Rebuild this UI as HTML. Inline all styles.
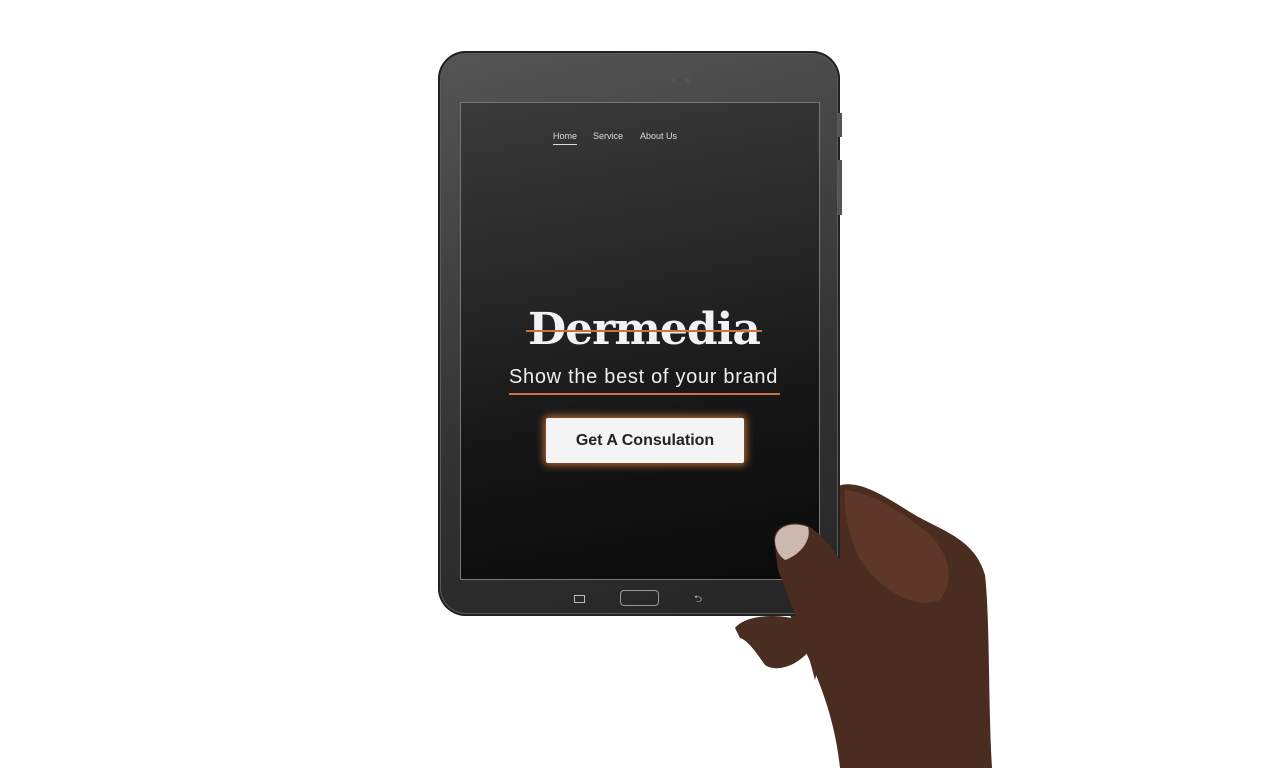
<!DOCTYPE html>
<html><head><style>
html,body{margin:0;padding:0;background:#fff;width:1280px;height:768px;overflow:hidden;position:relative;font-family:"Liberation Sans",sans-serif}
.tab{position:absolute;left:438px;top:51px;width:402px;height:565px;border-radius:28px;background:linear-gradient(165deg,#555 0%,#444 30%,#333 60%,#252525 100%);box-shadow:inset 0 0 0 2px #222,inset 0 0 0 3px #5a5a5a}
.scr{position:absolute;left:460px;top:102px;width:358px;height:476px;border:1px solid #777;background:linear-gradient(170deg,#3a3a3a 0%,#282828 35%,#161616 65%,#0a0a0a 100%)}
.nav{position:absolute;top:131px;font-size:9px;color:#ddd}
</style></head><body>
<svg style="position:absolute;left:0;top:0" width="1280" height="768">
<path d="M735 628 C745 615 780 612 805 622 L810 650 C795 668 775 672 765 665 C758 655 748 640 740 638 Z" fill="#4a2e22"/>
<path d="M838 486 C860 478 890 500 915 515 C945 532 975 540 985 575 C990 620 988 700 992 768 L840 768 C835 720 820 680 800 640 C785 605 775 570 775 540 C778 525 800 522 815 535 C825 548 836 560 840 560 Z" fill="#4b2c20"/>
<path d="M845 490 C870 492 900 510 930 535 C950 555 955 580 940 600 C915 610 880 590 860 560 C850 540 843 510 845 490Z" fill="#6b4030" opacity=".6"/>
</svg>
<div class="tab"></div>
<div style="position:absolute;left:838px;top:113px;width:4px;height:24px;background:#555"></div>
<div style="position:absolute;left:838px;top:160px;width:4px;height:55px;background:#555"></div>
<div style="position:absolute;left:671px;top:78px;width:4px;height:4px;border-radius:50%;background:#555"></div>
<div style="position:absolute;left:685px;top:78px;width:5px;height:5px;border-radius:50%;background:#555"></div>
<div class="scr"></div>
<div class="nav" style="left:553px;border-bottom:1px solid #ddd;padding-bottom:3px">Home</div>
<div class="nav" style="left:593px">Service</div>
<div class="nav" style="left:640px">About Us</div>
<div style="position:absolute;left:528px;top:304px;font-family:'DejaVu Serif',serif;font-weight:bold;font-size:44px;color:#f2f2f2;letter-spacing:-1px;white-space:nowrap">Dermedia</div>
<div style="position:absolute;left:526px;top:330px;width:236px;height:2px;background:#c8743f"></div>
<div style="position:absolute;left:509px;top:366px;font-size:20px;color:#eee;white-space:nowrap;letter-spacing:0.7px">Show the best of your brand</div>
<div style="position:absolute;left:509px;top:393px;width:271px;height:2px;background:#c8743f"></div>
<div style="position:absolute;left:546px;top:418px;width:198px;height:45px;background:#f4f4f4;border-radius:2px;box-shadow:0 0 8px 2px #b86a35;font-weight:bold;font-size:16px;color:#222;line-height:45px;text-align:center">Get A Consulation</div>
<div style="position:absolute;left:574px;top:595px;width:9px;height:6px;border:1px solid #bbb"></div>
<div style="position:absolute;left:620px;top:590px;width:37px;height:14px;border:1px solid #999;border-radius:4px"></div>
<div style="position:absolute;left:694px;top:592px;color:#bbb;font-size:10px">⮌</div>
<svg style="position:absolute;left:0;top:0" width="1280" height="768">
<path d="M774 540 C774 526 790 520 806 525 C820 532 832 548 840 560 L842 610 C830 630 820 660 815 680 C805 640 790 600 778 570 Z" fill="#4b2c20"/>
<path d="M775 540 C776 526 792 521 808 527 C812 540 800 555 785 560 C778 555 775 548 775 540Z" fill="#cdb8b0"/>
</svg>
</body></html>
